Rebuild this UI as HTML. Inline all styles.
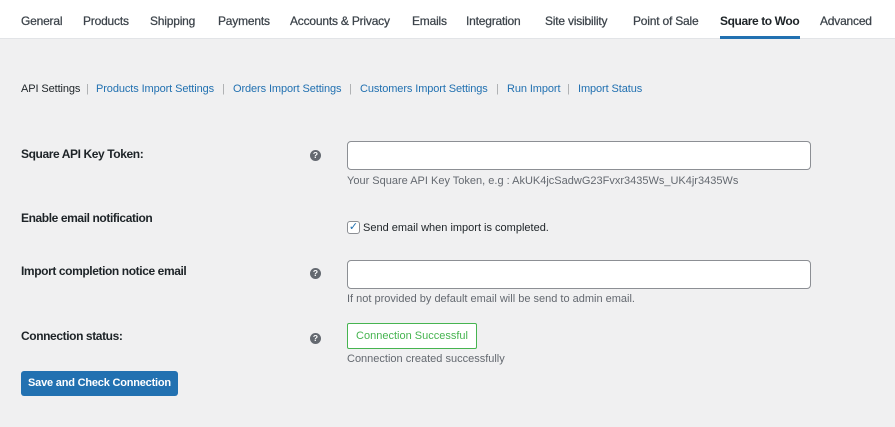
<!DOCTYPE html>
<html><head><meta charset="utf-8"><style>
body{margin:0;width:895px;height:427px;background:#f0f0f1;font-family:"Liberation Sans",Arial,sans-serif;position:relative;overflow:hidden;color:#1d2327}
.hdr{position:absolute;left:0;top:0;width:895px;height:38px;background:#fff;border-bottom:1px solid #e2e4e7}
.n{position:absolute;top:14px;font-size:12px;color:#3c434a;white-space:nowrap;letter-spacing:-0.2px;-webkit-text-stroke:0.25px #3c434a}
.act{color:#1d2327;font-weight:bold;letter-spacing:-0.4px;-webkit-text-stroke:0}
.ul{position:absolute;left:720px;top:36px;width:80px;height:3px;background:#2271b1}
.s{position:absolute;top:83px;font-size:11px;white-space:nowrap;color:#2271b1;letter-spacing:-0.1px}
.sep{color:#a7aaad}
.lab{position:absolute;left:21px;font-size:12px;font-weight:bold;color:#1d2327;letter-spacing:-0.4px}
.q{position:absolute;left:310px;width:11px;height:11px;border-radius:50%;background:#646970;color:#fff;font-size:8.5px;font-weight:bold;text-align:center;line-height:11px}
.in{position:absolute;left:347px;width:462px;height:27px;background:#fff;border:1px solid #8c8f94;border-radius:4px}
.d{position:absolute;left:347px;font-size:11px;color:#646970;white-space:nowrap}
</style></head><body>
<div class="hdr"></div>
<span class="n" style="left:21px">General</span>
<span class="n" style="left:83px">Products</span>
<span class="n" style="left:150px">Shipping</span>
<span class="n" style="left:218px">Payments</span>
<span class="n" style="left:290px">Accounts &amp; Privacy</span>
<span class="n" style="left:412px">Emails</span>
<span class="n" style="left:466px">Integration</span>
<span class="n" style="left:545px">Site visibility</span>
<span class="n" style="left:633px">Point of Sale</span>
<span class="n act" style="left:720px">Square to Woo</span>
<span class="n" style="left:820px">Advanced</span>
<div class="ul"></div>

<span class="s" style="left:21px;color:#1d2327">API Settings</span><span class="s sep" style="left:86px">|</span>
<span class="s" style="left:96px">Products Import Settings</span><span class="s sep" style="left:222px">|</span>
<span class="s" style="left:233px">Orders Import Settings</span><span class="s sep" style="left:349px">|</span>
<span class="s" style="left:360px">Customers Import Settings</span><span class="s sep" style="left:496px">|</span>
<span class="s" style="left:507px">Run Import</span><span class="s sep" style="left:567px">|</span>
<span class="s" style="left:578px">Import Status</span>

<span class="lab" style="top:147px">Square API Key Token:</span>
<div class="q" style="top:150px">?</div>
<div class="in" style="top:141px"></div>
<span class="d" style="top:175px">Your Square API Key Token, e.g : AkUK4jcSadwG23Fvxr3435Ws_UK4jr3435Ws</span>

<span class="lab" style="top:211px">Enable email notification</span>
<div style="position:absolute;left:347px;top:221px;width:11px;height:11px;border:1px solid #8c8f94;border-radius:3px;background:#fff;color:#2271b1;font-size:11px;line-height:11px;text-align:center">✓</div>
<span style="position:absolute;left:363px;top:222px;font-size:11px;color:#1d2327">Send email when import is completed.</span>

<span class="lab" style="top:264px">Import completion notice email</span>
<div class="q" style="top:268px">?</div>
<div class="in" style="top:260px"></div>
<span class="d" style="top:293px">If not provided by default email will be send to admin email.</span>

<span class="lab" style="top:329px">Connection status:</span>
<div class="q" style="top:333px">?</div>
<div style="position:absolute;left:347px;top:323px;width:128px;height:24px;border:1px solid #46b450;border-radius:2px;background:#fff;color:#46b450;font-size:11px;line-height:24px;text-align:center">Connection Successful</div>
<span class="d" style="top:353px">Connection created successfully</span>

<div style="position:absolute;left:21px;top:371px;width:157px;height:25px;background:#2271b1;border-radius:3px;color:#fff;font-size:11px;font-weight:bold;line-height:25px;text-align:center;letter-spacing:-0.2px">Save and Check Connection</div>
</body></html>
